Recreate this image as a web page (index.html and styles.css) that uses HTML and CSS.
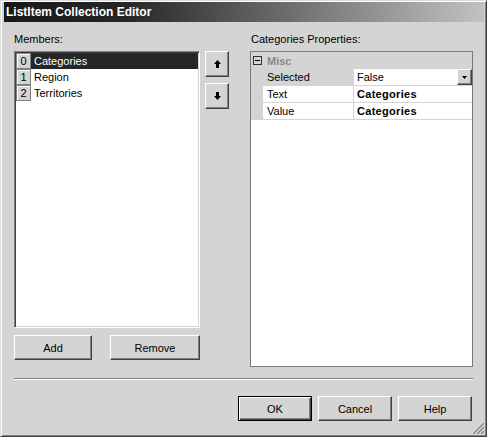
FILE: index.html
```html
<!DOCTYPE html>
<html>
<head>
<meta charset="utf-8">
<link rel="stylesheet" href="styles.css">
</head>
<body>
<div class="window">
  <div class="titlebar">ListItem Collection Editor</div>
  <div class="main">
    <div class="col-left">
      <div class="label">Members:</div>
      <div class="listbox">
        <div class="item selected"><span class="idx">0</span><span class="txt">Categories</span></div>
        <div class="item"><span class="idx">1</span><span class="txt">Region</span></div>
        <div class="item"><span class="idx">2</span><span class="txt">Territories</span></div>
      </div>
      <div class="left-buttons">
        <div class="btn btn-add">Add</div>
        <div class="btn btn-remove">Remove</div>
      </div>
    </div>
    <div class="col-arrows">
      <div class="btn arrow"><svg width="7" height="8" viewBox="0 0 7 8"><path d="M3.5 0 L7 4 H5 V8 H2 V4 H0 Z" fill="#000"/></svg></div>
      <div class="btn arrow arrow-down"><svg width="7" height="8" viewBox="0 0 7 8"><path d="M3.5 8 L7 4 H5 V0 H2 V4 H0 Z" fill="#000"/></svg></div>
    </div>
    <div class="col-right">
      <div class="label label-right">Categories Properties:</div>
      <div class="propgrid">
        <div class="cat-row"><span class="expander"></span><span class="cat-name">Misc</span></div>
        <div class="prop-row">
          <div class="margin"></div>
          <div class="pname pname-sel">Selected</div>
          <div class="pvalue"><span class="vtext">False</span><span class="dropdown"><svg width="5" height="3" viewBox="0 0 5 3"><path d="M0 0 H5 L2.5 3 Z" fill="#000"/></svg></span></div>
        </div>
        <div class="prop-row">
          <div class="margin"></div>
          <div class="pname">Text</div>
          <div class="pvalue"><span class="vtext bold">Categories</span></div>
        </div>
        <div class="prop-row">
          <div class="margin"></div>
          <div class="pname">Value</div>
          <div class="pvalue"><span class="vtext bold">Categories</span></div>
        </div>
      </div>
    </div>
  </div>
  <div class="separator"></div>
  <div class="footer">
    <div class="btn btn-footer btn-default">OK</div>
    <div class="btn btn-footer">Cancel</div>
    <div class="btn btn-footer">Help</div>
  </div>
  <div class="grip-row">
    <svg class="grip" width="12" height="12" viewBox="0 0 12 12">
      <path d="M12 0 L0 12 M12 4 L4 12 M12 8 L8 12" stroke="#ffffff" stroke-width="1"/>
      <path d="M12 1 L1 12 M12 5 L5 12 M12 9 L9 12" stroke="#707070" stroke-width="1.2"/>
    </svg>
  </div>
</div>
</body>
</html>
```

FILE: styles.css
```css
body {
  margin: 0;
  background: #d4d4d4;
  font-family: "Liberation Sans", Arial, sans-serif;
  font-size: 11px;
  color: #000;
}

.window {
  width: 487px;
  height: 437px;
  box-sizing: border-box;
  border: 1px solid;
  border-color: #dcdcdc #404040 #404040 #dcdcdc;
  box-shadow: inset 1px 1px #ffffff, inset -1px -1px #808080;
  padding: 1px 2px 0 3px;
  background: #d4d4d4;
  overflow: hidden;
  display: flex;
  flex-direction: column;
}

.titlebar {
  height: 20px;
  line-height: 20px;
  padding-left: 2px;
  background: linear-gradient(to right, #181818 0%, #262626 25%, #c2c2c2 100%);
  color: #fff;
  font-weight: bold;
  font-size: 12px;
}

.main {
  display: flex;
  padding: 11px 11px 0 10px;
}

.col-left {
  width: 186px;
  display: flex;
  flex-direction: column;
}

.label {
  height: 13px;
  line-height: 13px;
  margin-bottom: 5px;
}

.label-right {
  padding-left: 1px;
}

.listbox {
  height: 277px;
  box-sizing: border-box;
  background: #fff;
  border: 1px solid;
  border-color: #808080 #ffffff #ffffff #808080;
  box-shadow: inset 1px 1px #404040, inset -1px -1px #d4d4d4;
  padding: 1px 1px 1px 1px;
}

.item {
  display: flex;
  height: 16px;
  line-height: 16px;
}

.idx {
  width: 15px;
  box-sizing: border-box;
  background: #d4d4d4;
  border: 1px solid #808080;
  box-shadow: inset 1px 1px #ffffff;
  text-align: center;
  line-height: 14px;
}

.txt {
  flex: 1;
  padding-left: 3px;
}

.item.selected .txt {
  background: #262626;
  color: #fff;
}

.left-buttons {
  display: flex;
  justify-content: space-between;
  margin-top: 7px;
}

.btn {
  box-sizing: border-box;
  height: 25px;
  background: #d4d4d4;
  border: 1px solid;
  border-color: #ffffff #404040 #404040 #ffffff;
  box-shadow: inset -1px -1px #808080;
  display: flex;
  align-items: center;
  justify-content: center;
}

.btn-add {
  width: 78px;
}

.btn-remove {
  width: 90px;
}

.col-arrows {
  margin-left: 5px;
  width: 24px;
  padding-top: 18px;
  display: flex;
  flex-direction: column;
}

.arrow {
  width: 24px;
  height: 26px;
}

.arrow-down {
  margin-top: 6px;
}

.col-right {
  margin-left: 21px;
  flex: 1;
  display: flex;
  flex-direction: column;
}

.propgrid {
  height: 316px;
  box-sizing: border-box;
  border: 1px solid #7a7a7a;
  background: #fff;
}

.cat-row {
  height: 17px;
  background: #d4d4d4;
  display: flex;
  align-items: center;
}

.expander {
  width: 9px;
  height: 9px;
  box-sizing: border-box;
  border: 1px solid #303030;
  margin-left: 2px;
  background: linear-gradient(#000, #000) center / 5px 1px no-repeat;
}

.cat-name {
  margin-left: 5px;
  font-weight: bold;
  color: #8a8a8a;
  line-height: 16px;
}

.prop-row {
  display: flex;
  height: 17px;
}

.margin {
  width: 12px;
  background: #d4d4d4;
}

.pname {
  width: 91px;
  box-sizing: border-box;
  padding-left: 4px;
  border-right: 1px solid #d4d4d4;
  border-bottom: 1px solid #d4d4d4;
  line-height: 16px;
}

.pname-sel {
  background: #d4d4d4;
}

.pvalue {
  flex: 1;
  display: flex;
  align-items: flex-start;
  border-bottom: 1px solid #d4d4d4;
  padding-left: 3px;
  line-height: 16px;
}

.vtext {
  flex: 1;
}

.bold {
  font-weight: bold;
  letter-spacing: 0.3px;
}

.dropdown {
  width: 15px;
  height: 16px;
  box-sizing: border-box;
  background: #d4d4d4;
  border: 1px solid;
  border-color: #ffffff #404040 #404040 #ffffff;
  box-shadow: inset -1px -1px #808080;
  display: flex;
  align-items: center;
  justify-content: center;
}

.separator {
  margin: 11px 11px 0 10px;
  height: 2px;
  box-sizing: border-box;
  border-top: 1px solid #808080;
  border-bottom: 1px solid #ffffff;
}

.footer {
  display: flex;
  justify-content: flex-end;
  gap: 6px;
  margin-top: 16px;
  padding-right: 12px;
}

.btn-footer {
  width: 74px;
}

.btn-default {
  border: 1px solid #000;
  box-shadow: inset 1px 1px #ffffff, inset -1px -1px #404040, inset -2px -2px #808080;
}

.grip-row {
  display: flex;
  justify-content: flex-end;
  margin-top: 1px;
}

.grip {
  display: block;
}
```
